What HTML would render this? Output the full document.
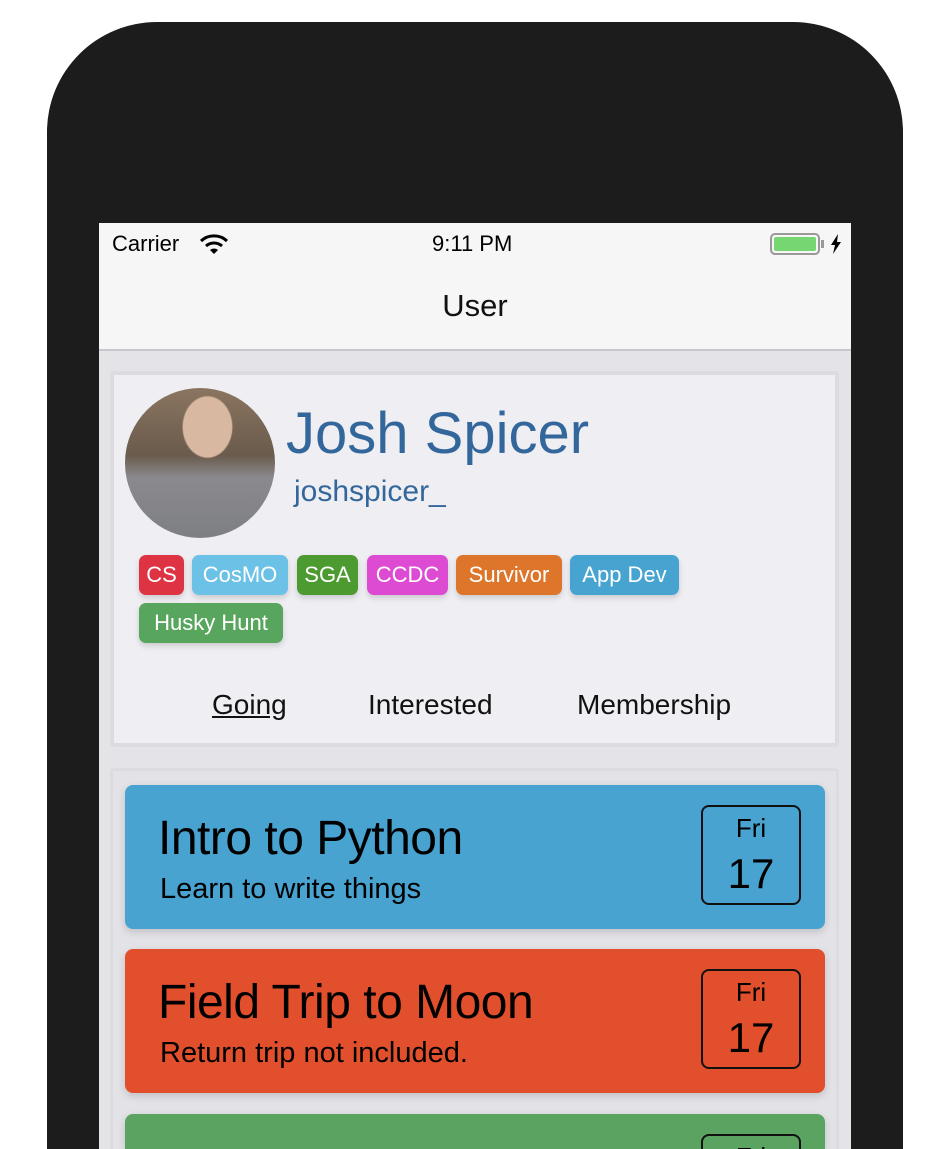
<!DOCTYPE html>
<html style="width:932px;height:1149px;overflow:hidden"><head><style>
*{margin:0;padding:0;box-sizing:border-box}
html,body{width:932px;height:1149px;overflow:hidden}
body{background:#fff;position:relative;font-family:"Liberation Sans",sans-serif}
.a{position:absolute}
.phone{left:47px;top:22px;width:856px;height:1127px;background:#1c1c1c;border-radius:110px 110px 0 0}
.screen{left:99px;top:223px;width:752px;height:926px;background:#e4e3e8;overflow:hidden}
.tag{position:absolute;height:40px;border-radius:7px;color:#fff;font-size:22px;line-height:40px;text-align:center;box-shadow:0 3px 6px rgba(0,0,0,.15)}
.card{position:absolute;left:125px;width:700px;height:144px;border-radius:8px;box-shadow:0 3px 8px rgba(0,0,0,.15)}
.card .t{position:absolute;left:33px;top:26px;font-size:48px;color:#000;letter-spacing:-0.5px}
.card .s{position:absolute;left:35px;top:88px;font-size:29px;color:#000}
.date{position:absolute;left:576px;top:20px;width:100px;height:100px;border:2px solid #111;border-radius:8px;text-align:center;color:#000}
.date .d{font-size:26px;margin-top:6px}
.date .n{font-size:42px;margin-top:6px}
</style></head><body>
<div class="a phone"></div>
<div class="a screen"></div>
<div class="a" style="left:99px;top:223px;width:752px;height:128px;background:#f6f6f6;border-bottom:2px solid #c8c8cc"></div>
<div class="a" style="left:112px;top:231px;font-size:22px;color:#000">Carrier</div>
<svg class="a" style="left:199px;top:233px" width="30" height="22" viewBox="0 0 30 22"><path d="M2 8a19 19 0 0 1 26 0" stroke="#000" stroke-width="3" fill="none"/><path d="M7 13a12 12 0 0 1 16 0" stroke="#000" stroke-width="3" fill="none"/><path d="M11 17l4 4 4-4a6 6 0 0 0-8 0z" fill="#000"/></svg>
<div class="a" style="left:432px;top:231px;font-size:22px;color:#000">9:11 PM</div>
<div class="a" style="left:770px;top:233px;width:50px;height:22px;border:2px solid #999;border-radius:5px;padding:2px"><div style="width:100%;height:100%;background:#76d672;border-radius:2px"></div></div>
<div class="a" style="left:821px;top:240px;width:3px;height:8px;background:#999"></div>
<svg class="a" style="left:830px;top:234px" width="12" height="20" viewBox="0 0 12 20"><path d="M8 0L1 11h4l-2 9 8-12H7z" fill="#000"/></svg>
<div class="a" style="left:0;width:950px;top:288px;text-align:center;font-size:31px;color:#111">User</div>

<div class="a" style="left:110px;top:371px;width:729px;height:376px;border:4px solid #dcdce0;background:#eeeef3;border-radius:4px"></div>
<div class="a" style="left:125px;top:388px;width:150px;height:150px;border-radius:50%;background:radial-gradient(ellipse 17% 21% at 55% 26%,#d8b8a0 0 95%,transparent 100%),linear-gradient(180deg,#8a7560 0%,#6a5b4c 45%,#8a8a8e 60%,#7e7f84 100%)"></div>
<div class="a" style="left:286px;top:400px;font-size:58px;color:#33679b">Josh Spicer</div>
<div class="a" style="left:294px;top:475px;font-size:30px;color:#33679b">joshspicer_</div>
<div class="tag" style="left:139px;top:555px;width:45px;background:#de3342">CS</div>
<div class="tag" style="left:192px;top:555px;width:96px;background:#6cc1e6">CosMO</div>
<div class="tag" style="left:297px;top:555px;width:61px;background:#4c9a30">SGA</div>
<div class="tag" style="left:367px;top:555px;width:81px;background:#dd4bd2">CCDC</div>
<div class="tag" style="left:456px;top:555px;width:106px;background:#dd762b">Survivor</div>
<div class="tag" style="left:570px;top:555px;width:109px;background:#47a4d1">App Dev</div>
<div class="tag" style="left:139px;top:603px;width:144px;background:#58a55d">Husky Hunt</div>
<div class="a" style="left:212px;top:689px;font-size:28px;color:#111;text-decoration:underline">Going</div>
<div class="a" style="left:368px;top:689px;font-size:28px;color:#111">Interested</div>
<div class="a" style="left:577px;top:689px;font-size:28px;color:#111">Membership</div>

<div class="a" style="left:110px;top:768px;width:729px;height:381px;border:3px solid #dcdce0;border-bottom:none;background:#e2e2e7;border-radius:4px 4px 0 0"></div>
<div class="card" style="top:785px;background:#49a3d0"><div class="t">Intro to Python</div><div class="s">Learn to write things</div><div class="date"><div class="d">Fri</div><div class="n">17</div></div></div>
<div class="card" style="top:949px;background:#e24f2c"><div class="t">Field Trip to Moon</div><div class="s">Return trip not included.</div><div class="date"><div class="d">Fri</div><div class="n">17</div></div></div>
<div class="card" style="top:1114px;height:35px;border-radius:8px 8px 0 0;background:#5ba360"><div class="date" style="height:40px;border-bottom:none;border-radius:8px 8px 0 0"><div class="d">Fri</div></div></div>
</body></html>
